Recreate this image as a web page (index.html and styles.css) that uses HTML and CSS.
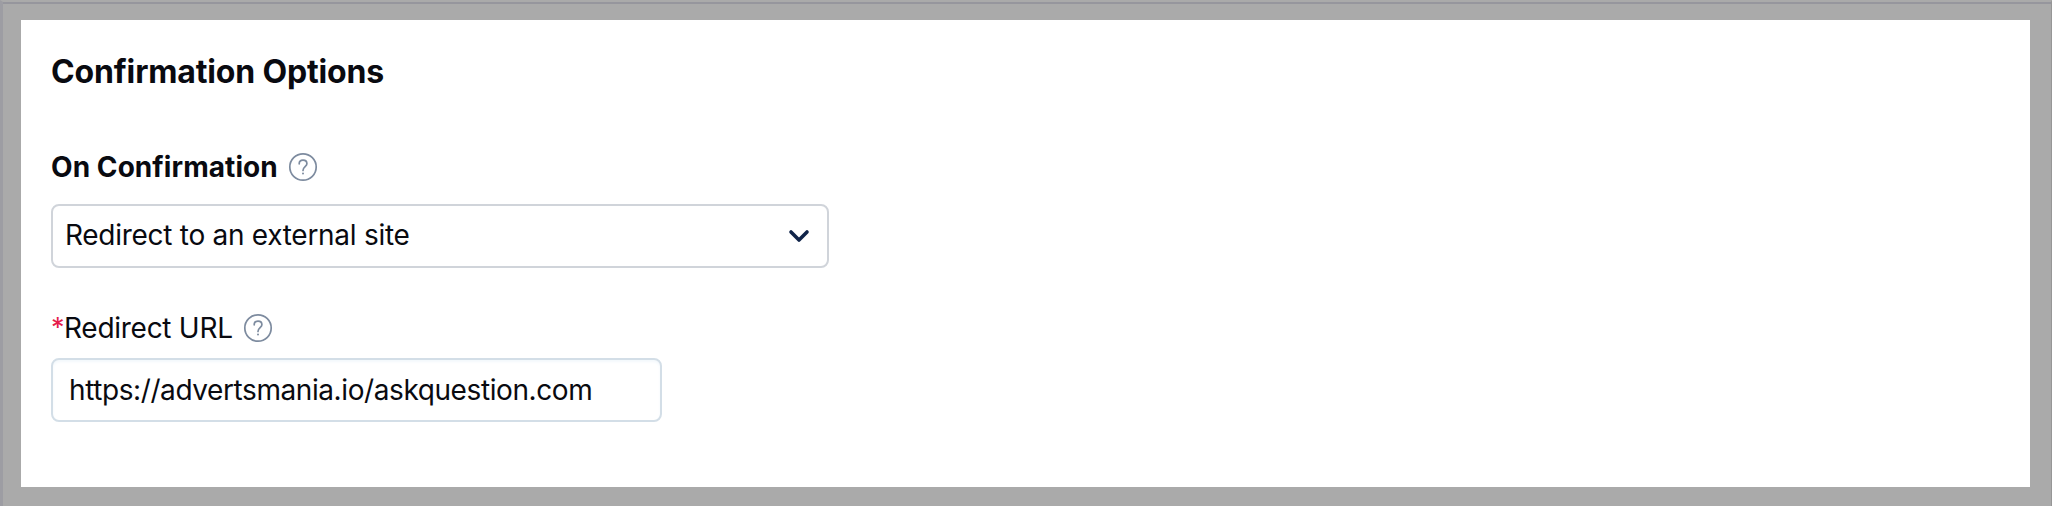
FILE: index.html
```html
<!DOCTYPE html>
<html lang="en">
<head>
<meta charset="utf-8">
<title>Confirmation Options</title>
<link rel="stylesheet" href="styles.css">
</head>
<body>
<main class="panel">
  <h1 class="title"><span>Confirmation Options</span></h1>
  <div class="label-row label-row-confirm">
    <label class="label label-strong">On Confirmation</label>
    <svg class="help" viewBox="0 0 30 30"><circle cx="15" cy="15" r="13.2"/><path d="M11.2 11.8C11.2 9.3 12.8 8.1 15 8.1s3.9 1.4 3.9 3.6c0 2.9-3.9 3.2-3.9 6.8"/><path class="dot" d="M15 21.4v.2"/></svg>
  </div>
  <div class="field select">
    <span class="select-text">Redirect to an external site</span>
    <svg class="chevron" viewBox="0 0 24 16"><path d="M4 4l8 8 8-8"/></svg>
  </div>
  <div class="label-row label-row-url">
    <label class="label"><span class="required">*</span><span class="url-label">Redirect URL</span></label>
    <svg class="help" viewBox="0 0 30 30"><circle cx="15" cy="15" r="13.2"/><path d="M11.2 11.8C11.2 9.3 12.8 8.1 15 8.1s3.9 1.4 3.9 3.6c0 2.9-3.9 3.2-3.9 6.8"/><path class="dot" d="M15 21.4v.2"/></svg>
  </div>
  <div class="field input"><span class="input-text">https://advertsmania.io/askquestion.com</span></div>
</main>
</body>
</html>
```
FILE: styles.css
```css
* { box-sizing: border-box; }
body {
  margin: 0;
  height: 506px;
  padding: 18px 21px 19px 18px;
  overflow: hidden;
  background: #aaa;
  border-top: 2px solid #aaa;
  border-left: 3px solid #9d9da3;
  border-right: 1px solid #969696;
  box-shadow: inset 0 2px #96969d;
  font-family: Inter, "Liberation Sans", sans-serif;
  color: #090a10;
}
.panel {
  height: 467px;
  padding: 32px 30px 0;
  background: #fff;
}
.title {
  margin: 0;
  font-size: 32px;
  line-height: 40px;
  font-weight: 700;
  letter-spacing: -0.15px;
}
.label-row {
  display: flex;
  align-items: center;
  gap: 10px;
  height: 36px;
}
.label-row-confirm { margin-top: 57px; }
.label {
  display: flex;
  font-size: 28px;
  line-height: 36px;
}
.label-strong { font-weight: 700; letter-spacing: 0.07px; }
.required { width: 13px; color: #e51c4b; font-size: 27px; }
.url-label { letter-spacing: -0.27px; }
.select-text { letter-spacing: -0.28px; padding-bottom: 2px; }
.input-text { letter-spacing: -0.41px; }
.help {
  width: 30px;
  height: 30px;
  fill: none;
  stroke: #7d8b9f;
  stroke-width: 1.7;
  stroke-linecap: round;
}
.dot { stroke-width: 2; }
.field {
  display: flex;
  align-items: center;
  height: 64px;
  border-radius: 8px;
  font-size: 28px;
  line-height: 36px;
}
.select {
  justify-content: space-between;
  width: 778px;
  margin-top: 19px;
  padding: 0 16px 0 12px;
  border: 2px solid #d0d4da;
}
.chevron {
  width: 24px;
  height: 16px;
  fill: none;
  stroke: #102449;
  stroke-width: 3.6;
  stroke-linecap: round;
  stroke-linejoin: round;
}
.label-row-url { margin-top: 42px; }
.input {
  width: 611px;
  margin-top: 12px;
  padding: 0 16px;
  border: 2px solid #d3dee7;
  box-shadow: inset 0 2px 3px #f3f8fc;
}
```
